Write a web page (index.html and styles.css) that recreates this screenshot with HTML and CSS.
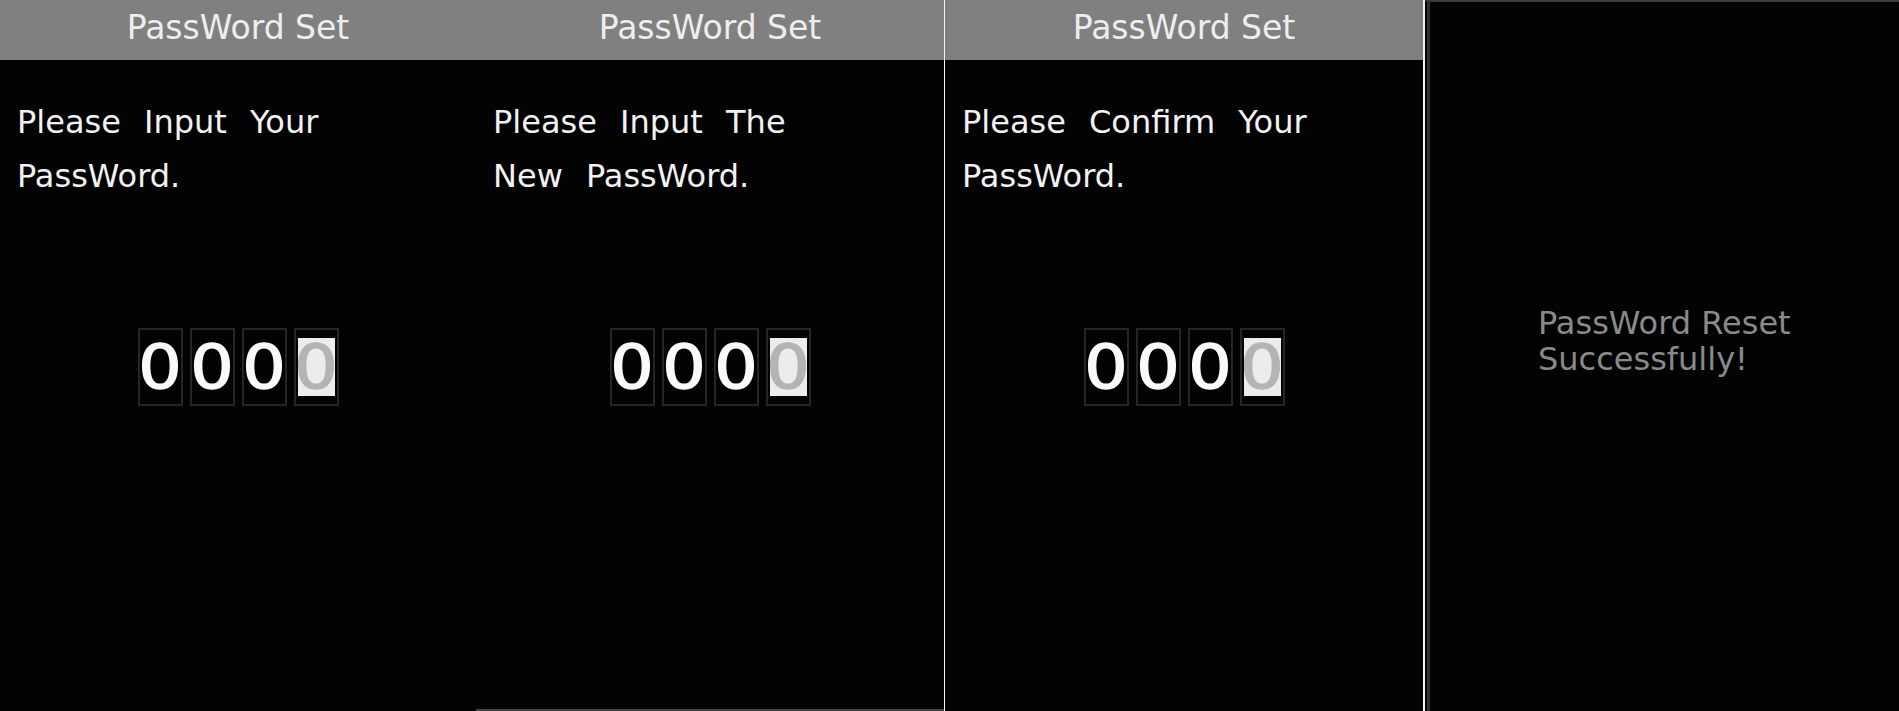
FILE: index.html
```html
<!DOCTYPE html>
<html lang="en">
<head>
<meta charset="utf-8">
<title>PassWord Set</title>
<link rel="stylesheet" href="styles.css">
</head>
<body>
<div class="strip">
  <section class="panel p1">
    <header class="bar">PassWord Set</header>
    <p class="prompt">Please Input Your<br>PassWord.</p>
    <div class="digits">
      <span class="cell"><span class="dg">0</span></span><span class="cell"><span class="dg">0</span></span><span class="cell"><span class="dg">0</span></span><span class="cell active"><span class="hl"><span class="dg">0</span></span></span>
    </div>
  </section>
  <section class="panel p2">
    <header class="bar">PassWord Set</header>
    <p class="prompt">Please Input The<br>New PassWord.</p>
    <div class="digits">
      <span class="cell"><span class="dg">0</span></span><span class="cell"><span class="dg">0</span></span><span class="cell"><span class="dg">0</span></span><span class="cell active"><span class="hl"><span class="dg">0</span></span></span>
    </div>
  </section>
  <section class="panel p3">
    <header class="bar">PassWord Set</header>
    <p class="prompt">Please Confirm Your<br>PassWord.</p>
    <div class="digits">
      <span class="cell"><span class="dg">0</span></span><span class="cell"><span class="dg">0</span></span><span class="cell"><span class="dg">0</span></span><span class="cell active"><span class="hl"><span class="dg">0</span></span></span>
    </div>
  </section>
  <section class="panel p4">
    <p class="done">PassWord Reset<br>Successfully!</p>
  </section>
</div>
</body>
</html>
```

FILE: styles.css
```css
html, body {
  margin: 0;
  padding: 0;
  background: #000;
}
body {
  font-family: "DejaVu Sans", "Liberation Sans", sans-serif;
  width: 1899px;
  height: 711px;
  overflow: hidden;
}
.strip {
  display: flex;
  height: 711px;
}
.panel {
  box-sizing: border-box;
  height: 711px;
  background: #030303;
  display: flex;
  flex-direction: column;
}
.p1 { width: 476px; }
.p2 { width: 468px; border-bottom: 2px solid #444; }
.p3 { width: 481px; border-left: 1px solid #f4f4f4; border-right: 2px solid #f4f4f4; }
.p4 {
  width: 474px;
  border-left: 2px solid #000;
  box-shadow: inset 3px 0 0 #303030;
  border-top: 2px solid #3c3c3c;
}
.bar {
  height: 60px;
  line-height: 55px;
  background: #808080;
  color: #eeeeee;
  font-size: 33px;
  text-align: center;
}
.prompt {
  margin: 35px 0 0;
  padding-left: 17px;
  color: #f2f2f2;
  font-size: 32px;
  line-height: 54px;
  word-spacing: 13px;
}
.digits {
  margin-top: 125px;
  display: flex;
  justify-content: center;
  gap: 7px;
}
.cell {
  box-sizing: border-box;
  width: 45px;
  height: 78px;
  border: 2px solid #262626;
  display: flex;
  align-items: center;
  justify-content: center;
  color: #fafafa;
  font-size: 60px;
  line-height: 1;
}
.dg {
  display: inline-block;
  -webkit-text-stroke: 1.4px currentColor;
  transform: scaleX(1.14);
}
.hl {
  width: 37px;
  height: 58px;
  background: #ececec;
  color: #b4b4b4;
  display: flex;
  align-items: center;
  justify-content: center;
}
.done {
  margin: 0;
  padding: 303px 0 0 111px;
  color: #8a8a8a;
  font-size: 32px;
  line-height: 36px;
}
```
